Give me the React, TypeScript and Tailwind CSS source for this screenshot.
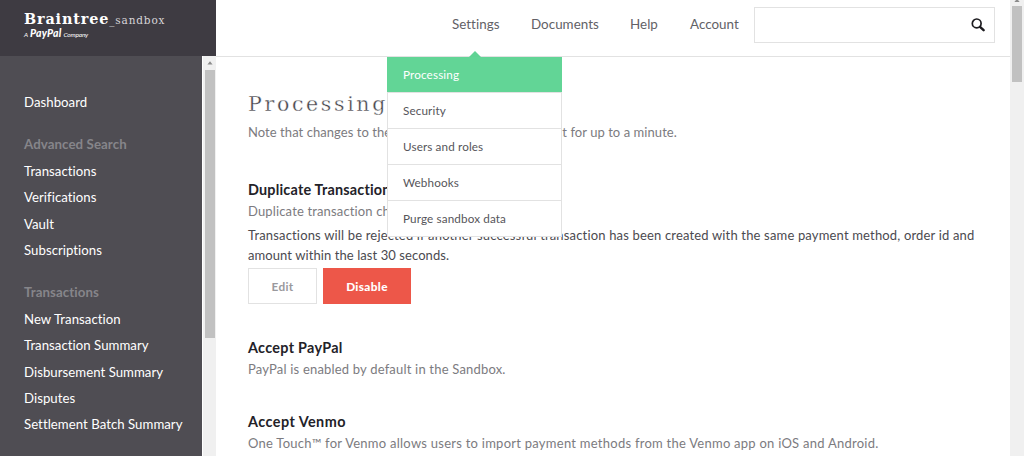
import type { ReactNode } from "react";

const sideLinks1 = ["Transactions", "Verifications", "Vault", "Subscriptions"];
const sideLinks2 = [
  "New Transaction",
  "Transaction Summary",
  "Disbursement Summary",
  "Disputes",
  "Settlement Batch Summary",
];
const menuItems = ["Security", "Users and roles", "Webhooks", "Purge sandbox data"];

function SideLink({ children }: { children: ReactNode }) {
  return (
    <a className="block h-[26.4px] whitespace-nowrap text-[13.2px] leading-[26.4px] tracking-[0.04px] text-white">
      {children}
    </a>
  );
}

function SideHeading({ children }: { children: ReactNode }) {
  return (
    <h3 className="mt-4 h-[26.4px] text-[13.3px] font-bold leading-[26.4px] tracking-[0.07px] text-[#86858a]">
      {children}
    </h3>
  );
}

function Sidebar() {
  return (
    <div className="flex w-[216px] shrink-0 flex-col">
      <div className="h-14 bg-[#3e3b42] pl-6 pt-[9px] text-white">
        <div className="flex h-[19px] items-baseline whitespace-nowrap font-['DejaVu_Serif',serif]">
          <span className="text-[14.4px] font-bold leading-[20px] tracking-[0.85px]">Braintree</span>
          <span className="text-[10.5px] leading-[20px] tracking-[0.85px] text-[#d6d5d8]">_sandbox</span>
        </div>
        <div className="flex h-[11px] items-baseline gap-[2px] whitespace-nowrap text-[6.5px] italic leading-[11px]">
          <span>A</span>
          <span className="text-[10.4px] font-black leading-[11px] tracking-[0.2px]">PayPal</span>
          <span className="tracking-[-0.15px]">Company</span>
        </div>
      </div>
      <div className="flex min-h-0 flex-1">
        <nav className="w-[202px] bg-[#4f4d53] pl-6 pt-[33px]">
          <SideLink>Dashboard</SideLink>
          <SideHeading>Advanced Search</SideHeading>
          {sideLinks1.map((l) => (
            <SideLink key={l}>{l}</SideLink>
          ))}
          <SideHeading>Transactions</SideHeading>
          {sideLinks2.map((l) => (
            <SideLink key={l}>{l}</SideLink>
          ))}
        </nav>
        <div className="flex w-[14px] flex-col items-center border-l border-white bg-[#f0f0f0]">
          <div className="flex h-[14px] w-full items-center justify-center">
            <svg width="6" height="4" viewBox="0 0 6 4">
              <path d="M3 0.3 5.6 3.6H.4z" fill="#8b8b8b" />
            </svg>
          </div>
          <div className="h-[268px] w-[10px] bg-[#c1c1c1]" />
        </div>
      </div>
    </div>
  );
}

function SettingsMenu() {
  return (
    <div className="absolute left-[-65px] top-[51px] z-10 w-[175px]">
      <svg className="mx-auto block" width="12" height="6" viewBox="0 0 12 6">
        <path d="M0 6 6 0l6 6z" fill="#60d394" />
      </svg>
      <div className="h-[35px] bg-[#62d596] pl-4 text-[11.7px] leading-[35px] tracking-[0.15px] text-white">Processing</div>
      <ul className="border-x border-b border-[#e2e2e2] bg-white text-[#56555a]">
        {menuItems.map((m) => (
          <li
            key={m}
            className="h-9 whitespace-nowrap border-t border-[#e2e2e2] pl-[15px] text-[11.7px] leading-[34px] tracking-[0.13px]"
          >
            {m}
          </li>
        ))}
      </ul>
    </div>
  );
}

function Header() {
  return (
    <header className="flex h-[57px] shrink-0 border-b border-[#e2e2e2] text-[13.4px] leading-[49px] text-[#626166]">
      <div className="relative ml-[236px] w-[79px] tracking-[0.02px]">
        Settings
        <SettingsMenu />
      </div>
      <a className="w-[99px] tracking-[0.02px]">Documents</a>
      <a className="w-[60px] tracking-[0.02px]">Help</a>
      <a className="w-16 tracking-[0.02px]">Account</a>
      <div className="mt-[7px] flex h-[36px] w-[241px] items-center justify-end border border-[#e2e2e2] pr-[9px]">
        <svg width="14" height="14" viewBox="0 0 14 14" fill="none" stroke="#1c1b1f">
          <circle cx="5.7" cy="5.4" r="4.4" strokeWidth="1.7" />
          <path d="m9 8.8 3.6 3.4" strokeWidth="2.4" strokeLinecap="round" />
        </svg>
      </div>
    </header>
  );
}

function Content() {
  return (
    <main className="flex-1 whitespace-nowrap pl-8 text-[13px] leading-5 text-[#7c7b80]">
      <h1 className="mt-[30px] h-[35px] font-['DejaVu_Serif',serif] text-[20.5px] font-normal leading-[35px] tracking-[2.65px] text-[#45444a] [-webkit-text-stroke:0.35px_white]">
        Processing
      </h1>
      <p className="tracking-[0.06px]">
        Note that changes to these settings may not take effect for up to a minute.
      </p>
      <h2 className="mt-[38px] text-[14.4px] font-bold leading-5 tracking-[0.2px] text-[#232228]">
        Duplicate Transaction
      </h2>
      <p className="mt-px tracking-[0.15px]">Duplicate transaction check</p>
      <p className="mt-[4px] text-[#4b4a4f]">
        <span className="block tracking-[0.165px]">
          Transactions will be rejected if another successful transaction has been created with the same payment method, order id and
        </span>
        <span className="block tracking-[0.08px]">amount within the last 30 seconds.</span>
      </p>
      <div className="mt-[3px] flex gap-[6px] text-[11.8px] font-bold leading-[35px] tracking-[0.35px]">
        <button className="h-[36px] w-[69px] border border-[#e2e2e2] bg-white text-[#9a999d]">Edit</button>
        <button className="h-[36px] w-[88px] bg-[#ed5749] font-black text-white">Disable</button>
      </div>
      <h2 className="mt-[34px] text-[14.4px] font-bold leading-5 tracking-[0.3px] text-[#232228]">Accept PayPal</h2>
      <p className="mt-px tracking-[0.19px]">PayPal is enabled by default in the Sandbox.</p>
      <h2 className="mt-[33px] text-[14.4px] font-bold leading-5 tracking-[0.45px] text-[#232228]">Accept Venmo</h2>
      <p className="mt-px tracking-[0.255px]">
        One Touch™ for Venmo allows users to import payment methods from the Venmo app on iOS and Android.
      </p>
    </main>
  );
}

export default function App() {
  return (
    <div className="flex h-[456px] w-[1024px] overflow-hidden bg-white font-['Lato',sans-serif]">
      <Sidebar />
      <div className="flex w-[794px] shrink-0 flex-col">
        <Header />
        <Content />
      </div>
      <div className="flex w-[14px] shrink-0 flex-col items-center bg-[#f0f0f0]">
        <svg className="h-[6px]" width="6" height="6" viewBox="0 0 6 6">
          <path d="M2 0h2l1.6 2H.4z" fill="#8b8b8b" />
        </svg>
        <div className="h-[76px] w-[10px] bg-[#c1c1c1]" />
      </div>
    </div>
  );
}
